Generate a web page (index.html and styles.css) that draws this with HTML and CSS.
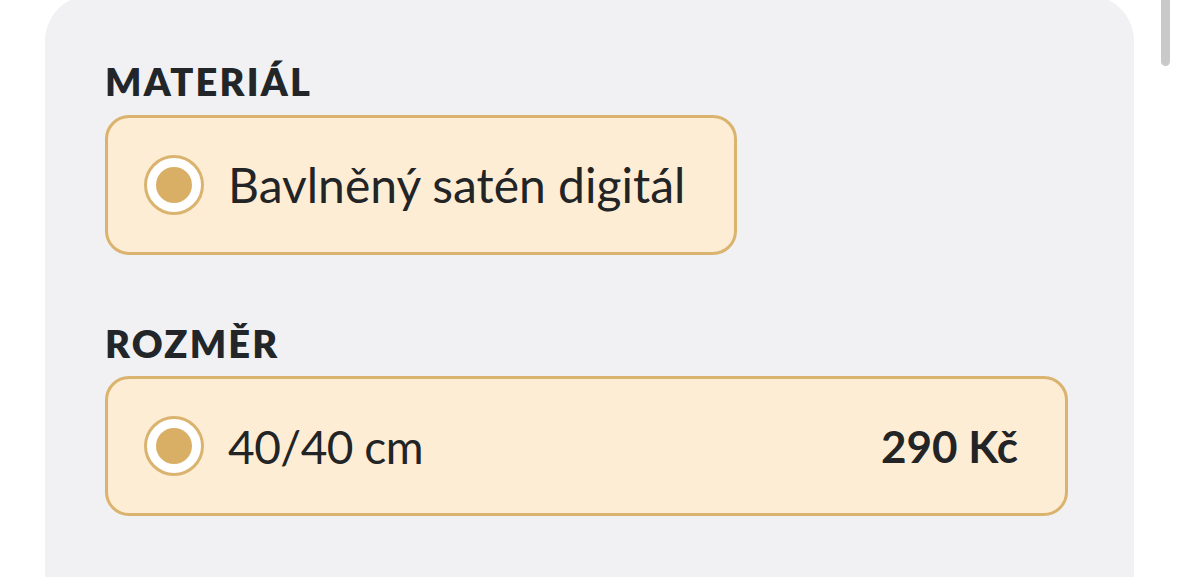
FILE: index.html
```html
<!DOCTYPE html>
<html lang="cs">
<head>
<meta charset="utf-8">
<title>Materiál a rozměr</title>
<link rel="stylesheet" href="styles.css">
</head>
<body>
<div class="panel">
  <section class="group">
    <h2 class="label">MATERIÁL</h2>
    <div class="option option-fit">
      <span class="radio"><span class="dot"></span></span>
      <span class="name">Bavlněný satén digitál</span>
    </div>
  </section>
  <section class="group group-size">
    <h2 class="label">ROZMĚR</h2>
    <div class="option option-wide">
      <span class="radio"><span class="dot"></span></span>
      <span class="name name-size">40/40 cm</span>
      <span class="price">290 Kč</span>
    </div>
  </section>
</div>
<div class="scrollbar"></div>
</body>
</html>
```
FILE: styles.css
```css
html, body {
  margin: 0;
  padding: 0;
  background: #ffffff;
  overflow: hidden;
}
body {
  font-family: Lato, "Noto Sans", sans-serif;
  color: #222426;
  height: 577px;
}
.panel {
  margin: -5px 0 0 45px;
  width: 1089px;
  height: 582px;
  box-sizing: border-box;
  background: #f1f1f4;
  border-radius: 46px 46px 0 0;
  padding: 64px 0 0 60px;
}
.group-size {
  margin-top: 66px;
}
.label {
  margin: 0 0 10px 0;
  font-size: 38px;
  line-height: 1.2;
  font-weight: 800;
  letter-spacing: 2.2px;
  color: #222629;
}
.option {
  display: flex;
  align-items: center;
  box-sizing: border-box;
  height: 140px;
  border: 3px solid #dab36f;
  border-radius: 24px;
  background: #feedd5;
  padding: 0 47px 0 36px;
}
.option-fit {
  display: inline-flex;
  padding-right: 49px;
}
.option-wide {
  width: 963px;
}
.radio {
  flex: none;
  width: 60px;
  height: 60px;
  box-sizing: border-box;
  border: 3px solid #dab36f;
  border-radius: 50%;
  background: #ffffff;
  display: flex;
  align-items: center;
  justify-content: center;
}
.dot {
  width: 36px;
  height: 36px;
  border-radius: 50%;
  background: #d9af65;
}
.name {
  margin-left: 24px;
  font-size: 48px;
  font-weight: 400;
  color: #222426;
}
.name-size {
  font-size: 46px;
  letter-spacing: -0.5px;
}
.price {
  margin-left: auto;
  font-size: 44px;
  font-weight: 700;
  color: #222426;
}
.scrollbar {
  position: absolute;
  top: 0;
  left: 1161px;
  width: 9px;
  height: 66px;
  border-radius: 0 0 5px 5px;
  background: #c9c9c9;
}
```
